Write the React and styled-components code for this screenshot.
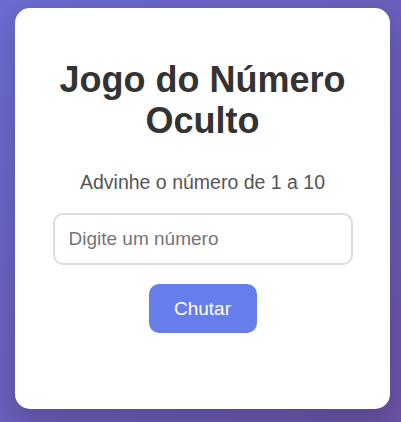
import React from "react";
import styled, { createGlobalStyle } from "styled-components";

const Global = createGlobalStyle`
  html, body { margin: 0; padding: 0; }
  body {
    font-family: "Liberation Sans", Arial, sans-serif;
    background: linear-gradient(135deg, #6a6dd2 0%, #6b53a6 100%);
    min-height: 100vh;
  }
`;

const Page = styled.div`
  min-height: 422px;
  box-sizing: border-box;
  padding: 8px 11px 13px 15px;
  display: flex;
  align-items: flex-start;
`;

const Card = styled.div`
  box-sizing: border-box;
  width: 375px;
  height: 401px;
  background: #fff;
  border-radius: 15px;
  box-shadow: 0 10px 30px rgba(0, 0, 0, 0.2);
  padding: 51px 37px 0;
  display: flex;
  flex-direction: column;
  align-items: center;
  text-align: center;
`;

const Title = styled.h1`
  margin: 0;
  font-size: 36px;
  font-weight: bold;
  color: #333;
  line-height: 41px;
`;

const Subtitle = styled.p`
  margin: 30px 0 19px;
  font-size: 19.5px;
  color: #555;
  line-height: 23px;
`;

const Input = styled.input`
  box-sizing: border-box;
  width: 300px;
  height: 52px;
  border: 2px solid #ddd;
  border-radius: 10px;
  padding: 0 14px;
  font-family: inherit;
  font-size: 19px;
  color: #333;
  outline: none;
  &::placeholder { color: #757575; }
`;

const Button = styled.button`
  margin-top: 19px;
  width: 108px;
  height: 49px;
  border: none;
  border-radius: 10px;
  background: #667eea;
  color: #fff;
  font-family: inherit;
  font-size: 19px;
  cursor: pointer;
`;

export default function App() {
  return (
    <>
      <Global />
      <Page>
        <Card>
          <Title>Jogo do Número<br />Oculto</Title>
          <Subtitle>Advinhe o número de 1 a 10</Subtitle>
          <Input type="number" placeholder="Digite um número" />
          <Button>Chutar</Button>
        </Card>
      </Page>
    </>
  );
}
